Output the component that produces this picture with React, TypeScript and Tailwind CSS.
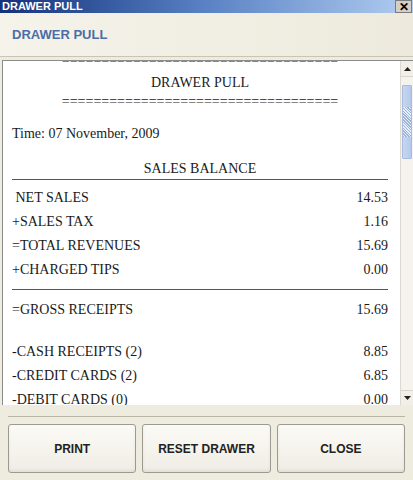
import React from 'react';

interface Row {
  label: string;
  value: string;
}

const topRows: Row[] = [
  { label: ' NET SALES', value: '14.53' },
  { label: '+SALES TAX', value: '1.16' },
  { label: '=TOTAL REVENUES', value: '15.69' },
  { label: '+CHARGED TIPS', value: '0.00' },
];

const payRows: Row[] = [
  { label: '-CASH RECEIPTS (2)', value: '8.85' },
  { label: '-CREDIT CARDS (2)', value: '6.85' },
  { label: '-DEBIT CARDS (0)', value: '0.00' },
];

const EQ = '===================================';

const ReceiptRow: React.FC<{ row: Row }> = ({ row }) => (
  <div className="flex h-[24px] items-center justify-between whitespace-pre">
    <span>{row.label}</span>
    <span>{row.value}</span>
  </div>
);

const Btn: React.FC<{ label: string }> = ({ label }) => (
  <button className="flex-1 h-[49px] rounded-[3px] border border-[#9c9a90] bg-gradient-to-b from-[#fbfaf6] to-[#efede4] text-[12px] font-bold text-[#222] shadow-[inset_0_-2px_3px_rgba(0,0,0,0.06)]">
    {label}
  </button>
);

export default function App() {
  return (
    <div className="w-[413px] h-[480px] overflow-hidden bg-[#eeecdf] flex flex-col" style={{ fontFamily: '"Liberation Sans", Arial, sans-serif' }}>
      {/* caption */}
      <div className="h-[13px] flex items-center justify-between bg-gradient-to-r from-[#15327a] via-[#5a82c4] to-[#b2cdf0]">
        <span className="pl-[2px] text-[11px] leading-none font-bold text-white">DRAWER PULL</span>
        <span className="mr-[1px] w-[17px] h-[13px] flex items-center justify-center bg-[#d4d0c8] border border-[#7a7a7a] text-[12px] leading-none font-bold text-black">
          ✕
        </span>
      </div>

      {/* header */}
      <div className="h-[44px] flex items-center pl-[12px] border-b border-[#c9c5b6] bg-gradient-to-r from-[#f5f3ea] to-[#edeadd]">
        <span className="text-[13px] font-bold text-[#4a6ea8]">DRAWER PULL</span>
      </div>

      {/* receipt + scrollbar */}
      <div className="mt-[3px] ml-[2px] flex h-[345px] border-t border-l border-[#8c8c8c]">
        <div className="flex-1 overflow-hidden bg-white pl-[9px] pr-[12px] text-[14px] text-[#1a1a1a]" style={{ fontFamily: '"Liberation Serif", "Times New Roman", serif' }}>
          <div className="-mt-[10px]">
            <div className="h-[22px] leading-[19px] text-center">{EQ}</div>
            <div className="h-[19px] leading-[19px] text-center">DRAWER PULL</div>
            <div className="h-[19px] leading-[19px] text-center">{EQ}</div>
            <div className="mt-[13px] h-[19px] leading-[19px]">Time: 07 November, 2009</div>
            <div className="mt-[16px] h-[19px] leading-[19px] text-center">SALES BALANCE</div>
            <div className="mt-[1px] h-[1px] bg-[#555]" />
            <div className="mt-[5px]">
              {topRows.map((r) => (
                <ReceiptRow key={r.label} row={r} />
              ))}
            </div>
            <div className="mt-[8px] h-[1px] bg-[#555]" />
            <div className="mt-[7px]">
              <ReceiptRow row={{ label: '=GROSS RECEIPTS', value: '15.69' }} />
            </div>
            <div className="mt-[18px]">
              {payRows.map((r) => (
                <ReceiptRow key={r.label} row={r} />
              ))}
            </div>
          </div>
        </div>

        {/* scrollbar */}
        <div className="w-[13px] flex flex-col bg-[#f4f3ee] border-l border-[#dcdad0]">
          <div className="h-[16px] flex items-center justify-center bg-[#f0efe8] border-b border-[#d8d6cc]">
            <svg width="7" height="4" viewBox="0 0 7 4"><path d="M3.5 0 L7 4 L0 4 Z" fill="#222" /></svg>
          </div>
          <div className="mt-[8px] h-[74px] mx-[1px] rounded-[1px] border border-[#a9bcdd] bg-gradient-to-r from-[#c5d6f2] to-[#b6c9ea] flex items-center justify-center">
            <div className="w-[8px] h-[30px] bg-[repeating-linear-gradient(45deg,#9fb3d6_0px,#9fb3d6_1px,#e6eefb_1px,#e6eefb_2px)]" />
          </div>
          <div className="flex-1" />
          <div className="h-[15px] flex items-center justify-center bg-[#f0efe8] border-t border-[#d8d6cc]">
            <svg width="7" height="4" viewBox="0 0 7 4"><path d="M0 0 L7 0 L3.5 4 Z" fill="#222" /></svg>
          </div>
        </div>
      </div>

      {/* footer */}
      <div className="mx-[8px] mt-[11px] h-[1px] bg-[#b9b6a8]" />
      <div className="mt-[7px] flex gap-[6px] px-[8px]">
        <Btn label="PRINT" />
        <Btn label="RESET DRAWER" />
        <Btn label="CLOSE" />
      </div>
    </div>
  );
}
